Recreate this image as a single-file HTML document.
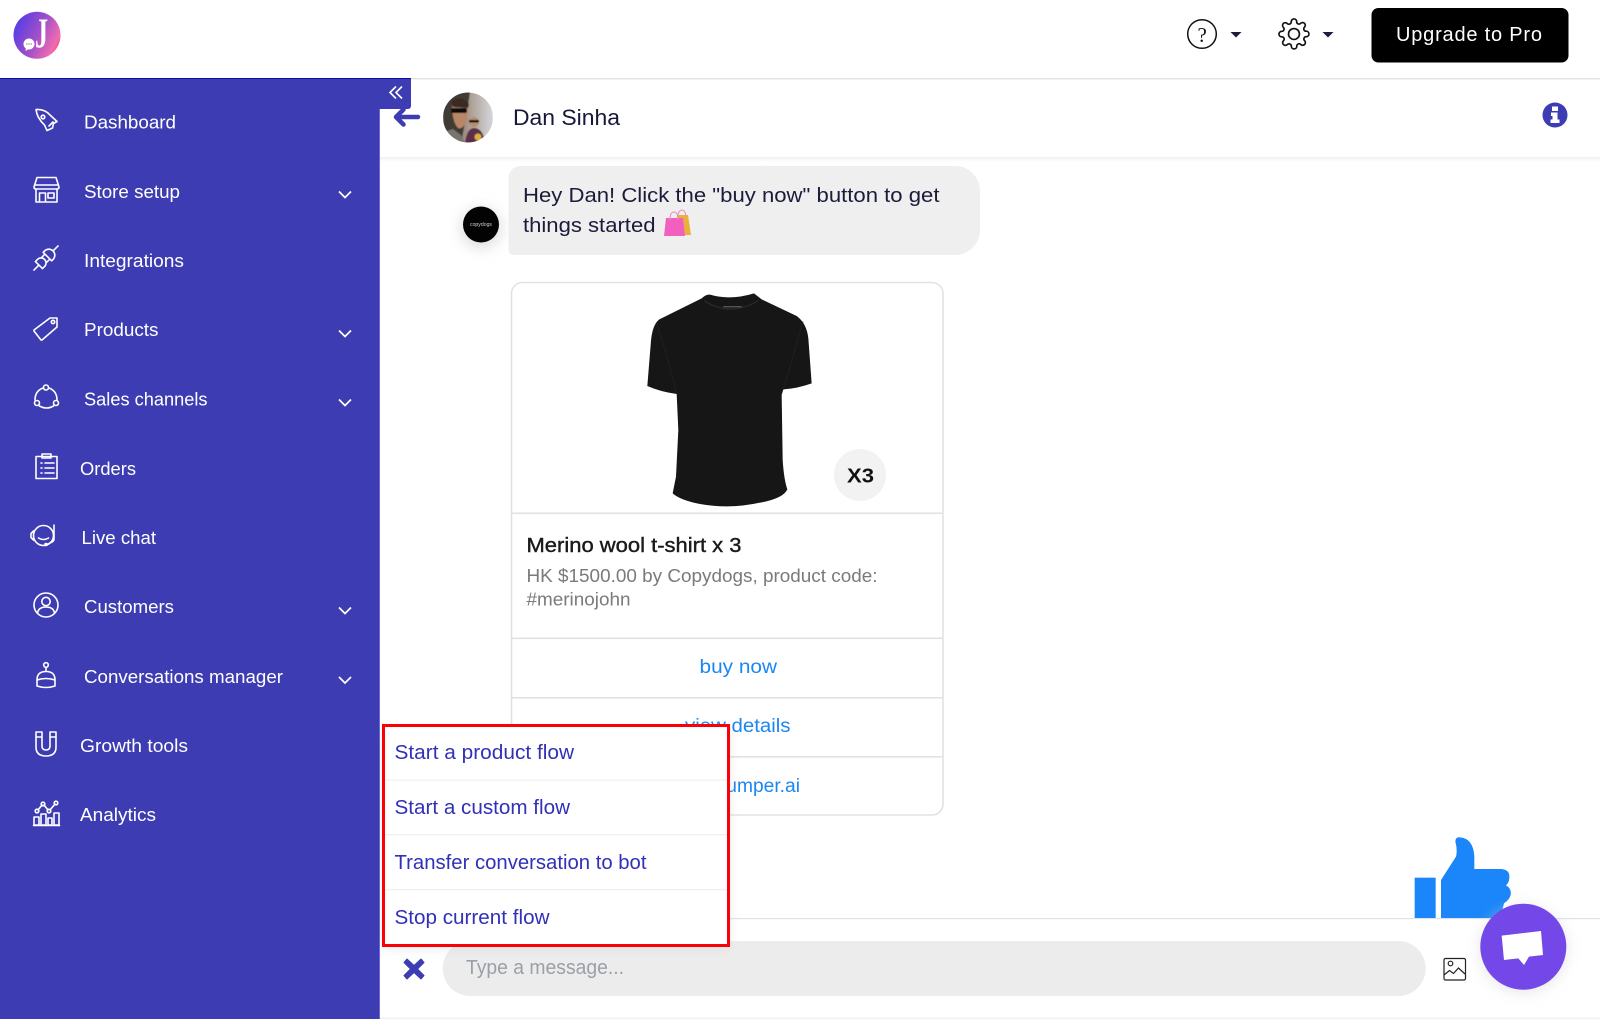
<!DOCTYPE html>
<html lang="en">
<head>
<meta charset="utf-8">
<title>Live chat</title>
<style>
html,body{margin:0;padding:0;background:#fff;width:1600px;height:1019px;overflow:hidden}
svg{display:block}
text{font-family:"Liberation Sans",Arial,sans-serif}
.nav{fill:#fff;font-size:18px}
.ic{fill:none;stroke:#fff;stroke-width:1.6;stroke-linecap:round;stroke-linejoin:round}
.ch{fill:none;stroke:#fff;stroke-width:1.7}
.m{fill:#3030b8;font-size:20px}
.b{fill:#1b86f2;font-size:19px}
</style>
</head>
<body>
<svg width="1600" height="1019" viewBox="0 0 1600 1019" xmlns="http://www.w3.org/2000/svg">
<defs>
<linearGradient id="lg" x1="0" y1="0.2" x2="1" y2="0.7"><stop offset="0" stop-color="#4f3be8"/><stop offset=".55" stop-color="#a550c8"/><stop offset=".9" stop-color="#f06cb0"/><stop offset="1" stop-color="#f4506a"/></linearGradient>
<linearGradient id="hs" x1="0" y1="0" x2="0" y2="1"><stop offset="0" stop-color="#f1f1f1"/><stop offset="1" stop-color="#fff"/></linearGradient>
<linearGradient id="av" x1="0" y1="0" x2="1" y2="0"><stop offset="0" stop-color="#55483c"/><stop offset=".5" stop-color="#a79a8c"/><stop offset="1" stop-color="#d5d7dc"/></linearGradient>
<filter id="bl" x="-50%" y="-50%" width="200%" height="200%"><feGaussianBlur stdDeviation="7"/></filter>
<filter id="bm" x="-10%" y="-10%" width="120%" height="120%"><feGaussianBlur stdDeviation="5"/></filter>
<filter id="sf" x="-5%" y="-5%" width="110%" height="110%"><feGaussianBlur stdDeviation=".4"/></filter>
<clipPath id="avc"><circle cx="468" cy="117.500" r="25"/></clipPath>
</defs>

<!-- top bar -->
<rect x="0" y="78" width="1600" height="1.500" fill="#e4e4e4"/>
<circle cx="37" cy="35.300" r="23.500" fill="url(#lg)"/>
<text x="35" y="47.500" font-size="42" font-weight="700" fill="#fff" textLength="13" lengthAdjust="spacingAndGlyphs" style="font-family:'Liberation Serif',serif">J</text>
<circle cx="29" cy="44" r="5.500" fill="#fff"/><path d="M26 47.500l-.5 3.500 4-2.500z" fill="#fff"/>
<g fill="#999"><circle cx="26.800" cy="44" r=".8"/><circle cx="29" cy="44" r=".8"/><circle cx="31.200" cy="44" r=".8"/></g>

<circle cx="1202" cy="34" r="14.300" fill="none" stroke="#111" stroke-width="1.500"/>
<text x="1197.500" y="42" font-size="21" fill="#111" style="font-family:'Liberation Serif',serif">?</text>
<path d="M1230.500 32h11l-5.500 5.500z" fill="#1d1d3a"/>
<g transform="translate(1277.600 17.600) scale(1.364)" fill="none" stroke="#111" stroke-width="1.200" stroke-linejoin="round">
<circle cx="12" cy="12" r="4"/>
<path d="M19.400 15a1.650 1.650 0 0 0 .33 1.820l.06.06a2 2 0 0 1 0 2.830 2 2 0 0 1-2.830 0l-.06-.06a1.650 1.650 0 0 0-1.820-.33 1.650 1.650 0 0 0-1 1.510V21a2 2 0 0 1-2 2 2 2 0 0 1-2-2v-.09A1.650 1.650 0 0 0 9 19.400a1.650 1.650 0 0 0-1.820.33l-.06.06a2 2 0 0 1-2.830 0 2 2 0 0 1 0-2.830l.06-.06a1.650 1.650 0 0 0 .33-1.820 1.650 1.650 0 0 0-1.510-1H3a2 2 0 0 1-2-2 2 2 0 0 1 2-2h.09A1.650 1.650 0 0 0 4.600 9a1.650 1.650 0 0 0-.33-1.820l-.06-.06a2 2 0 0 1 0-2.830 2 2 0 0 1 2.830 0l.06.06a1.650 1.650 0 0 0 1.820.33H9a1.650 1.650 0 0 0 1-1.510V3a2 2 0 0 1 2-2 2 2 0 0 1 2 2v.09a1.650 1.650 0 0 0 1 1.510 1.650 1.650 0 0 0 1.820-.33l.06-.06a2 2 0 0 1 2.830 0 2 2 0 0 1 0 2.830l-.06.06a1.650 1.650 0 0 0-.33 1.820V9a1.650 1.650 0 0 0 1.510 1H21a2 2 0 0 1 2 2 2 2 0 0 1-2 2h-.09a1.650 1.650 0 0 0-1.510 1z"/>
</g>
<path d="M1322.500 32h11l-5.500 5.500z" fill="#1d1d3a"/>
<rect x="1371.500" y="8" width="197" height="54.500" rx="7" fill="#000"/>
<text x="1396" y="41" font-size="20" fill="#fff" textLength="146" lengthAdjust="spacing">Upgrade to Pro</text>

<!-- chat header -->
<rect x="379" y="157" width="1221" height="5" fill="url(#hs)"/>
<g clip-path="url(#avc)">
<g filter="url(#sf)">
<rect x="443" y="92" width="50" height="51" fill="url(#av)"/>
<path d="M443 92h27l-3 20-6 31h-18z" fill="#3f3a35"/>
<path d="M452 104q10-8 16 2l-1 14q-4 10-9 8-6-6-6-24z" fill="#b98767"/>
<path d="M451 103q8-10 18 1l-1 4-15-1z" fill="#3a2a20"/>
<rect x="451" y="108" width="16" height="5" rx="2" fill="#111"/>
<path d="M443 143v-11l10-3 8 6 4 8z" fill="#77736d"/>
<circle cx="474" cy="122" r="5" fill="#b88c6e"/><rect x="469" y="120" width="10" height="2.500" fill="#111"/>
<path d="M465 143q2-15 9-15 9 0 11 15z" fill="#5d2f4a"/>
<circle cx="478" cy="137" r="3.500" fill="#d9b13c"/>
</g>
</g>
<text x="513" y="125" font-size="22" fill="#17173a" textLength="107" lengthAdjust="spacingAndGlyphs">Dan Sinha</text>
<circle cx="1555" cy="115" r="12.500" fill="#3d3cb2"/>
<path d="M1552 106.500h6v4.500h-6zM1551 112.500h6.500v7h2v3.500h-9v-3.500h2v-3.500h-1.500z" fill="#fff"/>

<!-- messages -->
<circle cx="481" cy="228" r="20" fill="#ddd" filter="url(#bl)"/>
<circle cx="481" cy="224.500" r="18" fill="#030303"/>
<text x="470" y="226" font-size="5" fill="#ccc" textLength="22" lengthAdjust="spacingAndGlyphs">copydogs</text>
<path d="M533 166H955a25 25 0 0 1 25 25v39a25 25 0 0 1-25 25H513a4.500 4.500 0 0 1-4.500-4.500V178a12 12 0 0 1 12-12z" fill="#efefef"/>
<text x="523" y="202" font-size="20.500" fill="#1b1b3a" textLength="416.500" lengthAdjust="spacingAndGlyphs">Hey Dan! Click the "buy now" button to get</text>
<text x="523" y="232" font-size="20.500" fill="#1b1b3a" textLength="132.500" lengthAdjust="spacingAndGlyphs">things started</text>
<path d="M677 215h11l3 20h-14z" fill="#e9b23a"/>
<path d="M666 218h17l2 18h-21z" fill="#f25fbe"/>
<path d="M670 220q0-8 4-8t4 8M678 215q1-5 4-5t4 6" fill="none" stroke="#e78fbf" stroke-width="1.100"/>

<!-- product card -->
<rect x="511.500" y="282.500" width="431.500" height="532.500" rx="11" fill="#fff" stroke="#e2e2e2" stroke-width="1.600"/>
<g transform="translate(500 280) scale(.33333)">
<path d="M605 55Q618 42 630 44Q690 62 762 40L785 58 890 108Q920 130 925 175L935 310Q890 326 850 328L845 345 848 540Q852 600 862 628Q850 655 780 668Q690 688 600 672Q540 660 518 640L528 590 535 450 530 342Q480 335 442 318L452 195Q455 135 478 118Z" fill="#131313" filter="url(#sf)"/>
<path d="M612 62Q690 112 775 62" fill="none" stroke="#262626" stroke-width="5"/>
<path d="M470 130Q500 220 530 340M908 125Q880 230 850 328" fill="none" stroke="#1c1c1c" stroke-width="5"/>
<path d="M670 80h55" stroke="#555" stroke-width="4"/>
</g>
<circle cx="860" cy="475" r="26" fill="#f2f2f2"/>
<text x="847" y="482.500" font-size="20" font-weight="700" fill="#111" textLength="27" lengthAdjust="spacingAndGlyphs">X3</text>
<rect x="512" y="512.500" width="431" height="1.600" fill="#e2e2e2"/>
<text x="526.500" y="552" font-size="20" fill="#1a1a1a" stroke="#1a1a1a" stroke-width=".4" textLength="215" lengthAdjust="spacingAndGlyphs">Merino wool t-shirt x 3</text>
<text x="526.500" y="582" font-size="18" fill="#7a7a7a" textLength="351" lengthAdjust="spacingAndGlyphs">HK $1500.00 by Copydogs, product code:</text>
<text x="526.500" y="605.500" font-size="18" fill="#7a7a7a" textLength="104" lengthAdjust="spacingAndGlyphs">#merinojohn</text>
<rect x="512" y="637.500" width="431" height="1.600" fill="#e2e2e2"/>
<rect x="512" y="697" width="431" height="1.600" fill="#e2e2e2"/>
<rect x="512" y="756" width="431" height="1.600" fill="#e2e2e2"/>
<text class="b" x="699.500" y="673" textLength="77.500" lengthAdjust="spacingAndGlyphs">buy now</text>
<text class="b" x="685" y="732" textLength="105.500" lengthAdjust="spacingAndGlyphs">view details</text>
<text class="b" x="722" y="792" textLength="78" lengthAdjust="spacingAndGlyphs">jumper.ai</text>

<!-- thumb -->
<g transform="translate(1380 820) scale(.33333)" fill="#1a86fa">
<rect x="104" y="173" width="63" height="123"/>
<path d="M183 296V180L228 110Q233 90 226 65Q226 50 240 52Q280 55 283 110V147H365Q390 150 388 172Q388 187 378 196Q395 205 392 225Q388 240 372 250L360 296Z"/>
</g>

<!-- bottom input -->
<rect x="730" y="918" width="870" height="1.200" fill="#dde3ea"/>
<rect x="379" y="1017.500" width="1221" height="1.500" fill="#f0f0f0"/>
<path d="M407 962L414 968.500 421 962 424 965.500 417.500 972 424 978.500 421 982 414 975.500 407 982 404 978.500 410.500 972 404 965.500Z" transform="translate(0 -3)" fill="#3d3cb2" stroke="#3d3cb2" stroke-linejoin="round"/>
<rect x="442.700" y="941" width="983" height="55" rx="27.500" fill="#ececec"/>
<text x="466" y="974" font-size="20" fill="#9a9fa8" textLength="158" lengthAdjust="spacingAndGlyphs">Type a message...</text>
<g fill="none" stroke="#222" stroke-width="1.200">
<rect x="1444" y="958.500" width="21.500" height="21.500" rx="1.500"/>
<circle cx="1450.500" cy="963.500" r="2.300"/>
<path d="M1444 975l5.500-4.500 4 3 5-5.500 6.500 6"/>
</g>
<circle cx="1523.300" cy="949" r="43" fill="#ccc" filter="url(#bl)" opacity=".5"/>
<circle cx="1523.300" cy="946.700" r="43" fill="#7448e8"/>
<g transform="translate(1380 820) scale(.33333)"><path d="M365 347 483 333 489 405 447 410 432 435 415 415 372 420Z" fill="#fff"/></g>

<!-- popup menu -->
<rect x="384" y="730" width="345" height="218" fill="#bbb" opacity=".35" filter="url(#bm)"/>
<rect x="383.500" y="725.500" width="345" height="220" fill="#fff" stroke="#fb0007" stroke-width="3"/>
<rect x="385" y="779.500" width="342" height="1.300" fill="#f0f0f0"/>
<rect x="385" y="834" width="342" height="1.300" fill="#f0f0f0"/>
<rect x="385" y="889" width="342" height="1.300" fill="#f0f0f0"/>
<text class="m" x="394.500" y="759" textLength="179.500" lengthAdjust="spacingAndGlyphs">Start a product flow</text>
<text class="m" x="394.500" y="814" textLength="175.500" lengthAdjust="spacingAndGlyphs">Start a custom flow</text>
<text class="m" x="394.500" y="869" textLength="252" lengthAdjust="spacingAndGlyphs">Transfer conversation to bot</text>
<text class="m" x="394.500" y="924" textLength="155" lengthAdjust="spacingAndGlyphs">Stop current flow</text>

<!-- sidebar -->
<rect x="0" y="78" width="379.500" height="941" fill="#3d3cb2"/>
<rect x="379" y="109" width="1" height="910" fill="#6a69d2"/>
<path d="M379 78h32v28a3 3 0 0 1-3 3h-29z" fill="#3d3cb2"/>
<rect x="0" y="78" width="411" height="1" fill="#0e0eaa"/>
<path d="M396 86.500l-6 6 6 6M402 86.500l-6 6 6 6" fill="none" stroke="#fff" stroke-width="1.600"/>
<path d="M396 117l7.500-7.500M396 117l7.500 7.500M397 117h21" fill="none" stroke="#3d3cb2" stroke-width="4.500" stroke-linecap="round"/>

<text class="nav" x="84" y="128.500" textLength="92" lengthAdjust="spacingAndGlyphs">Dashboard</text>
<text class="nav" x="84" y="198" textLength="96" lengthAdjust="spacingAndGlyphs">Store setup</text>
<text class="nav" x="84" y="267" textLength="100" lengthAdjust="spacingAndGlyphs">Integrations</text>
<text class="nav" x="84" y="336" textLength="74.500" lengthAdjust="spacingAndGlyphs">Products</text>
<text class="nav" x="84" y="405.500" textLength="123.500" lengthAdjust="spacingAndGlyphs">Sales channels</text>
<text class="nav" x="80" y="475" textLength="56" lengthAdjust="spacingAndGlyphs">Orders</text>
<text class="nav" x="81.500" y="544" textLength="74.500" lengthAdjust="spacingAndGlyphs">Live chat</text>
<text class="nav" x="84" y="613" textLength="90" lengthAdjust="spacingAndGlyphs">Customers</text>
<text class="nav" x="84" y="683" textLength="199" lengthAdjust="spacingAndGlyphs">Conversations manager</text>
<text class="nav" x="80" y="752" textLength="108" lengthAdjust="spacingAndGlyphs">Growth tools</text>
<text class="nav" x="80" y="821" textLength="76" lengthAdjust="spacingAndGlyphs">Analytics</text>

<path class="ch" d="M339 191.500l6 6 6-6"/>
<path class="ch" d="M339 330.500l6 6 6-6"/>
<path class="ch" d="M339 399.500l6 6 6-6"/>
<path class="ch" d="M339 607.500l6 6 6-6"/>
<path class="ch" d="M339 677l6 6 6-6"/>

<g class="ic">
<!-- rocket -->
<path d="M36 109.500Q45 109 50 115L57 121.500 53.500 123.500 52.500 128 47 130.500 44.500 125Q37 118 36 109.500Z"/><circle cx="43" cy="117" r="1.800"/><path d="M49 126l4-4"/>
<!-- store -->
<path d="M37 177.500h19l3 9.500q0 2-2 2H36q-2 0-2-2zM34.500 185h24M36 189v13h21v-13M39.500 202v-9h6v9M48 193h6v5h-6z"/>
<!-- plug -->
<g transform="translate(46 258) rotate(-45)">
<path d="M-17 0h7M-10-5h3a5 5 0 0 1 0 10h-3zM-2-3.500h4M-2 3.500h4M2-6h2a6 6 0 0 1 6 6 6 6 0 0 1-6 6H2zM10 0h7"/>
</g>
<!-- tag -->
<path d="M50 318h7v9l-15 13h-1l-7-9v-1z"/><circle cx="53" cy="322" r="1.700"/>
<!-- sales -->
<circle cx="46" cy="387.500" r="2.500"/><circle cx="37" cy="403" r="2.500"/><circle cx="56" cy="403" r="2.500"/>
<path d="M43 388q-8 3-8 12M49 388q8 3 8 12M39.500 406q7 4 14 0"/>
<!-- orders -->
<rect x="36" y="456.500" width="21" height="22"/><rect x="42" y="454" width="9" height="4"/>
<path d="M41 463h1M45 463h9M41 468h1M45 468h9M41 473h1M45 473h9"/>
<!-- live chat -->
<circle cx="43.500" cy="535.500" r="10"/><path d="M33.500 531l-2.500 2.500v4l2.500 2.500M54 525v14q0 2-2 3l-5 2.500M38.500 538q5 3 10 0"/><circle cx="46" cy="544.500" r="1"/>
<!-- customer -->
<circle cx="46" cy="605" r="12"/><circle cx="46" cy="601.500" r="4.200"/><path d="M37.500 613q1-6 8.500-6t8.500 6"/>
<!-- robot -->
<circle cx="46" cy="665" r="2.300"/><path d="M46 667.500v4M37 686v-6q0-8.500 9-8.500t9 8.500v6q-9 3-18 0zM37 680q9-3 18 0"/>
<!-- magnet -->
<path d="M36 732h6v14q0 4 4 4t4-4v-14h6v15q0 9-10 9t-10-9zM36 737h6M50 737h6"/>
<!-- analytics -->
<rect x="34" y="817" width="5" height="8"/><rect x="41" y="814" width="5" height="11"/><rect x="48" y="818" width="4" height="7"/><rect x="54" y="813" width="5" height="12"/>
<path d="M33.500 825.500h26"/>
<circle cx="37" cy="811" r="1.800"/><circle cx="43" cy="804" r="1.800"/><circle cx="49" cy="811" r="1.800"/><circle cx="56" cy="803" r="1.800"/><path d="M38 810l4-5M44 805l4 5M50 810l5-6"/>
</g>
</svg>
</body>
</html>
